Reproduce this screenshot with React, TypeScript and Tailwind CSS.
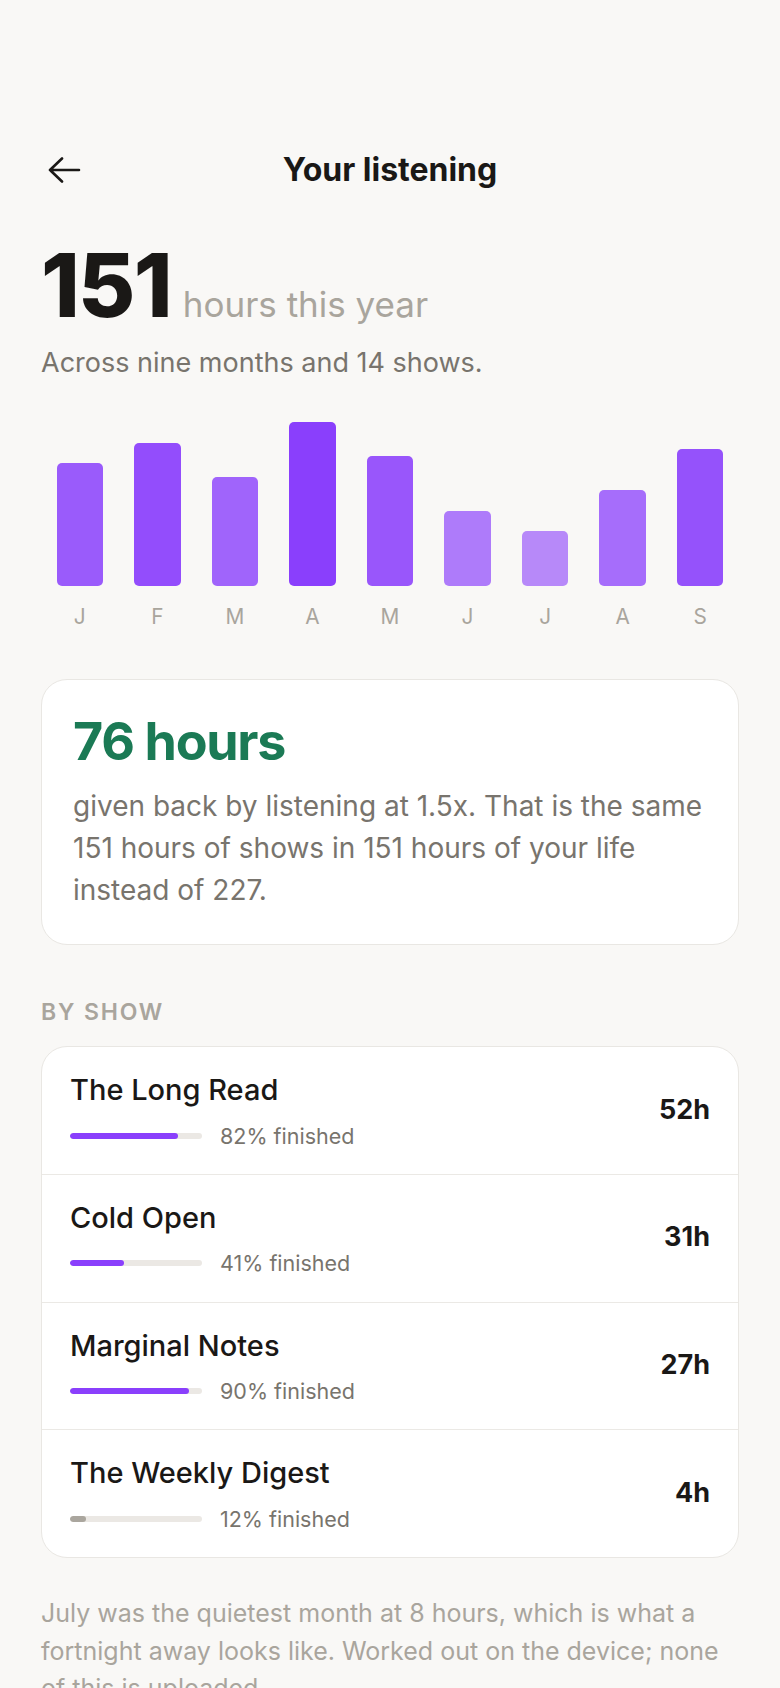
import React from "react";

// Monthly listening hours, Jan..Sep
const months = [
  { label: "J", hours: 18 },
  { label: "F", hours: 21 },
  { label: "M", hours: 16 },
  { label: "A", hours: 24 },
  { label: "M", hours: 19 },
  { label: "J", hours: 11 },
  { label: "J", hours: 8 },
  { label: "A", hours: 14 },
  { label: "S", hours: 20 },
];

const shows = [
  { name: "The Long Read", done: 82, hours: "52h", muted: false },
  { name: "Cold Open", done: 41, hours: "31h", muted: false },
  { name: "Marginal Notes", done: 90, hours: "27h", muted: false },
  { name: "The Weekly Digest", done: 12, hours: "4h", muted: true },
];

const maxHours = Math.max(...months.map((m) => m.hours));

function BackArrow() {
  return (
    <svg width="40" height="26" viewBox="0 0 40 26" fill="none">
      <path
        d="M9 13h29M21 1.5 9 13l12 11.5"
        stroke="#1a1816"
        strokeWidth="2.6"
        strokeLinecap="round"
        strokeLinejoin="round"
      />
    </svg>
  );
}

function MonthChart() {
  return (
    <div className="mt-[39px]">
      <div className="grid grid-cols-9 h-[164px] items-end">
        {months.map((m, i) => (
          <div key={i} className="flex justify-center h-full items-end">
            <div
              className="w-[60%] rounded-[5px] bg-[#8a3ffc]"
              style={{
                height: `${(m.hours / maxHours) * 100}%`,
                opacity: 0.4 + 0.6 * (m.hours / maxHours),
              }}
            />
          </div>
        ))}
      </div>
      <div className="grid grid-cols-9 mt-[15px]">
        {months.map((m, i) => (
          <div key={i} className="text-center text-[20.8px] leading-[1.5] text-[#a9a59d]">
            {m.label}
          </div>
        ))}
      </div>
    </div>
  );
}

function ShowRow({ show, last }: { show: (typeof shows)[number]; last: boolean }) {
  return (
    <div
      className={
        "flex items-center justify-between px-[28px] pt-[21px] pb-[22px]" +
        (last ? "" : " border-b border-[#ebe9e5]")
      }
    >
      <div className="flex flex-col">
        <div className="text-[29px] leading-[1.5] font-medium text-[#1a1816]">{show.name}</div>
        <div className="mt-[8px] flex items-center gap-[18px]">
          <div className="w-[132px] h-[6px] rounded-full bg-[#ebe8e4] overflow-hidden">
            <div
              className={"h-full rounded-full " + (show.muted ? "bg-[#aaa69e]" : "bg-[#8a3ffc]")}
              style={{ width: `${show.done}%` }}
            />
          </div>
          <span className="text-[21.5px] leading-[1.5] text-[#78746d]">{show.done}% finished</span>
        </div>
      </div>
      <div className="text-[27px] font-bold text-[#1a1816]">{show.hours}</div>
    </div>
  );
}

export default function App() {
  return (
    <div className="min-h-screen bg-[#f9f8f6] font-[Inter,sans-serif] px-[41px] pt-[150px] pb-10">
      {/* Header */}
      <header className="relative h-[40px] flex items-center">
        <button className="absolute left-0 top-[7px]">
          <BackArrow />
        </button>
        <h1 className="w-full text-center text-[32px] leading-[40px] font-bold text-[#1a1816]">
          Your listening
        </h1>
      </header>

      {/* Total */}
      <div className="mt-[51px] flex items-baseline gap-[12px]">
        <span className="text-[88px] leading-none font-extrabold tracking-[-0.02em] text-[#1a1816]">151</span>
        <span className="text-[35px] text-[#a9a59d]">hours this year</span>
      </div>
      <p className="mt-[12px] text-[27px] leading-[1.5] text-[#78746d]">
        Across nine months and 14 shows.
      </p>

      <MonthChart />

      {/* Time saved */}
      <div className="mt-[47px] rounded-[26px] border border-[#e9e7e3] bg-white px-[31px] pt-[31px] pb-[33px]">
        <div className="text-[52px] leading-[1.2] font-bold tracking-[-0.025em] text-[#1b7a55]">76 hours</div>
        <p className="mt-[11px] text-[28px] leading-[42px] text-[#78746d]">
          given back by listening at 1.5x. That is the same 151 hours of shows in 151 hours of your
          life instead of 227.
        </p>
      </div>

      {/* By show */}
      <h2 className="mt-[50px] text-[23px] leading-[1.5] font-semibold tracking-[0.08em] text-[#a9a59d]">
        BY SHOW
      </h2>
      <div className="mt-[17px] rounded-[26px] border border-[#e9e7e3] bg-white overflow-hidden">
        {shows.map((s, i) => (
          <ShowRow key={s.name} show={s} last={i === shows.length - 1} />
        ))}
      </div>

      <p className="mt-[37px] max-w-[682px] text-[25px] leading-[37.7px] text-[#a9a59d]">
        July was the quietest month at 8 hours, which is what a fortnight away looks like. Worked
        out on the device; none of this is uploaded.
      </p>
    </div>
  );
}
